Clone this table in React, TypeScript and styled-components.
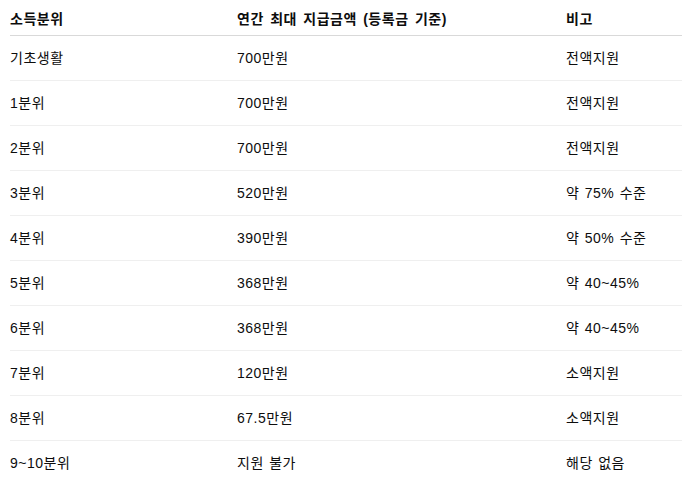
import * as React from 'react';
import styled, { createGlobalStyle } from 'styled-components';

const GlobalStyle = createGlobalStyle`
  html, body {
    margin: 0;
    padding: 0;
    background: #ffffff;
  }
  body {
    font-family: "Liberation Sans", "Noto Sans CJK KR", sans-serif;
    color: #0d0d0d;
    overflow: hidden;
  }
`;

const Wrap = styled.div`
  padding: 0 0 0 10px;
  width: 682px;
  box-sizing: border-box;
`;

const Table = styled.table`
  width: 680px;
  border-collapse: collapse;
  table-layout: fixed;
  font-size: 14px;
`;

const HeadCell = styled.th<{ $w: number }>`
  width: ${(p) => p.$w}px;
  height: 34px;
  padding: 1px 0 0;
  text-align: left;
  font-weight: 700;
  letter-spacing: 0.5px;
  word-spacing: 2px;
  vertical-align: middle;
  border-bottom: 1px solid #d9d9d9;
`;

const Row = styled.tr<{ $last?: boolean }>`
  height: 45px;
  border-bottom: ${(p) => (p.$last ? 'none' : '1px solid #efefef')};
`;

const Cell = styled.td`
  padding: 0;
  vertical-align: middle;
  line-height: 20px;
  letter-spacing: 0.5px;
  word-spacing: 1px;
`;

const rows: [string, string, string][] = [
  ['기초생활', '700만원', '전액지원'],
  ['1분위', '700만원', '전액지원'],
  ['2분위', '700만원', '전액지원'],
  ['3분위', '520만원', '약 75% 수준'],
  ['4분위', '390만원', '약 50% 수준'],
  ['5분위', '368만원', '약 40~45%'],
  ['6분위', '368만원', '약 40~45%'],
  ['7분위', '120만원', '소액지원'],
  ['8분위', '67.5만원', '소액지원'],
  ['9~10분위', '지원 불가', '해당 없음'],
];

const App = () => {
  return (
    <Wrap>
      <GlobalStyle />
      <Table>
        <thead>
          <tr>
            <HeadCell $w={227}>소득분위</HeadCell>
            <HeadCell $w={329}>연간 최대 지급금액 (등록금 기준)</HeadCell>
            <HeadCell $w={124}>비고</HeadCell>
          </tr>
        </thead>
        <tbody>
          {rows.map((r, i) => (
            <Row key={r[0]} $last={i === rows.length - 1}>
              <Cell>{r[0]}</Cell>
              <Cell>{r[1]}</Cell>
              <Cell>{r[2]}</Cell>
            </Row>
          ))}
        </tbody>
      </Table>
    </Wrap>
  );
};

export default App;
